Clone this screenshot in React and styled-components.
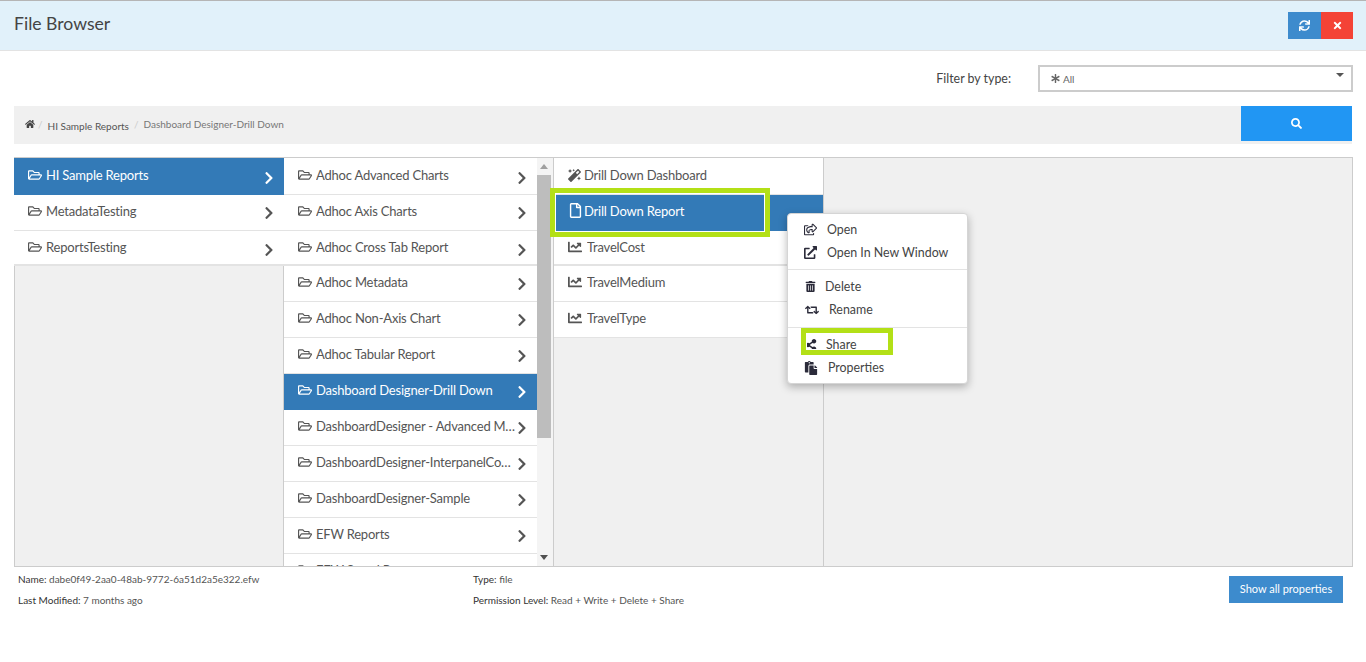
import React from "react";
import styled, { createGlobalStyle } from "styled-components";
import {
  FaAsterisk,
  FaChartLine,
  FaChevronRight,
  FaExternalLinkAlt,
  FaHome,
  FaMagic,
  FaPaste,
  FaRegFile,
  FaRegFolderOpen,
  FaRegShareSquare,
  FaRetweet,
  FaSearch,
  FaShareAlt,
  FaSync,
  FaTimes,
  FaTrashAlt,
} from "react-icons/fa";

const GlobalStyle = createGlobalStyle`
  html, body {
    margin: 0;
    background: #fff;
    font-family: "Lato", "Liberation Sans", sans-serif;
    color: #555;
  }
  * { box-sizing: border-box; }
`;

const Header = styled.header`
  height: 51px;
  display: flex;
  align-items: center;
  justify-content: space-between;
  padding: 0 13px 1px 14px;
  background: #e1f1fa;
  border-top: 1px solid #b5b5b5;
  border-bottom: 1px solid #e3e3e3;
`;

const Title = styled.h1`
  margin: 0 0 3px;
  font-size: 17.6px;
  font-weight: 400;
  color: #444;
`;

const HeaderButtons = styled.div`
  display: flex;
`;

const HeaderButton = styled.button`
  width: ${(p) => p.$width}px;
  height: 27px;
  border: 0;
  padding: 0;
  display: flex;
  align-items: center;
  justify-content: center;
  color: #fff;
  font-size: 11px;
  background: ${(p) => p.$bg};
`;

const Content = styled.main`
  padding: 14px 13px 0 14px;
`;

const FilterRow = styled.div`
  display: flex;
  justify-content: flex-end;
  align-items: center;
  height: 27px;
`;

const FilterLabel = styled.label`
  font-size: 12.4px;
  color: #444;
  margin-right: 27px;
`;

const Select = styled.div`
  position: relative;
  width: 315px;
  height: 27px;
  border: 2px solid #ccc;
  display: flex;
  align-items: center;
  gap: 3px;
  padding-left: 11px;
  font-size: 10px;
  color: #666;

  &::after {
    content: "";
    position: absolute;
    top: 6px;
    right: 7px;
    border-left: 4px solid transparent;
    border-right: 4px solid transparent;
    border-top: 4px solid #555;
  }
`;

const CrumbBar = styled.div`
  display: flex;
  align-items: flex-start;
  justify-content: space-between;
  height: 38px;
  margin: 14px 1px 0 0;
  background: #f0f0f0;
`;

const Crumbs = styled.div`
  display: flex;
  align-items: center;
  height: 36px;
  padding-left: 11px;
  font-size: 10px;
  color: #444;
`;

const CrumbDivider = styled.span`
  color: #ccc;
  margin: 0 5px 0 3px;
`;

const CrumbLink = styled.span`
  color: #555;
  padding-top: 4px;
  margin-right: 2px;
`;

const CrumbCurrent = styled.span`
  color: #777;
`;

const SearchButton = styled.button`
  width: 111px;
  height: 35px;
  border: 0;
  padding: 0;
  display: flex;
  align-items: center;
  justify-content: center;
  color: #fff;
  font-size: 11px;
  background: #2196f3;
`;

const Browser = styled.section`
  position: relative;
  display: flex;
  height: 410px;
  margin-top: 13px;
  background: #f0f0f0;
  border: 1px solid #ccc;
`;

const Column = styled.div`
  position: relative;
  display: flex;
  flex: 0 0 ${(p) => p.$width}px;
  height: 100%;
  border-right: ${(p) => (p.$divider ? "1px solid #ccc" : "0")};
  overflow: ${(p) => (p.$clip ? "hidden" : "visible")};
`;

const List = styled.ul`
  flex: 1;
  min-width: 0;
  margin: 0;
  padding: 0;
  list-style: none;
`;

const RootList = styled(List)`
  margin: 0 -1px;
`;

const Row = styled.li`
  position: relative;
  display: flex;
  align-items: center;
  height: 36px;
  padding: 0 10px 4px 14px;
  font-size: 13px;
  letter-spacing: -0.2px;
  color: ${(p) => (p.$active ? "#fff" : "#555")};
  background: ${(p) => (p.$active ? "#337ab7" : "#fff")};
  border-bottom: 1px solid ${(p) => (p.$active ? "#337ab7" : "#e3e3e3")};

  &:first-child {
    height: 37px;
    padding-bottom: 2px;
  }

  &:nth-child(3) {
    height: 35px;
    padding-bottom: 1px;
    border-bottom-width: 2px;
  }
`;

const RowIcon = styled.span`
  display: flex;
  flex: none;
  margin-right: ${(p) => p.$gap || 4}px;
  font-size: ${(p) => p.$size || 14}px;
  color: ${(p) => (p.$active ? "#fff" : "#555")};
`;

const RowLabel = styled.span`
  flex: 1;
  min-width: 0;
  white-space: nowrap;
  overflow: hidden;
  text-overflow: ellipsis;
`;

const Chevron = styled(FaChevronRight)`
  flex: none;
  width: 10px;
  height: 14px;
  margin-top: 5px;
  color: ${(p) => (p.$active ? "#fff" : "#555")};
`;

const Scrollbar = styled.div`
  flex: 0 0 16px;
  display: flex;
  flex-direction: column;
  align-items: center;
  padding-right: 2px;
  background: #f4f4f4;
`;

const ArrowUp = styled.div`
  margin: 6px 0 6px;
  border-left: 4px solid transparent;
  border-right: 4px solid transparent;
  border-bottom: 5px solid #a0a0a0;
`;

const ArrowDown = styled.div`
  margin-top: auto;
  margin-bottom: 6px;
  border-left: 4px solid transparent;
  border-right: 4px solid transparent;
  border-top: 5px solid #505050;
`;

const Thumb = styled.div`
  width: 14px;
  height: 263px;
  background: #bdbdbd;
`;

const Highlight = styled.div`
  position: absolute;
  top: ${(p) => p.$top}px;
  left: ${(p) => p.$left}px;
  width: ${(p) => p.$w}px;
  height: ${(p) => p.$h}px;
  border: 5px solid #b3e017;
  box-shadow: inset 0 0 0 1px #fff;
  pointer-events: none;
`;

const Menu = styled.div`
  position: absolute;
  top: 55px;
  left: 772px;
  width: 181px;
  height: 171px;
  padding: 4px 0;
  background: #fff;
  border: 1px solid #d5d5d5;
  border-radius: 4px;
  box-shadow: 0 3px 8px rgba(0, 0, 0, 0.28);
`;

const MenuItem = styled.div`
  position: relative;
  display: flex;
  align-items: center;
  height: 23px;
  padding-left: ${(p) => p.$pad || 16}px;
  font-size: 12.4px;
  color: #444;
`;

const MenuIcon = styled.span`
  display: flex;
  margin-right: ${(p) => p.$gap}px;
  font-size: ${(p) => p.$size || 13}px;
  color: #2b2b3a;
`;

const MenuDivider = styled.div`
  height: 1px;
  margin: ${(p) => p.$top || 5}px 0 5px;
  background: #e3e3e3;
`;

const Footer = styled.footer`
  display: flex;
  align-items: flex-start;
  padding: 6px 10px 0 4px;
`;

const Meta = styled.div`
  flex: 0 0 ${(p) => p.$width}px;
  font-size: 10px;
  color: #555;
`;

const MetaLine = styled.p`
  margin: 0 0 9px;
  height: 12px;
  line-height: 12px;
`;

const MetaKey = styled.span`
  color: #333;
`;

const PropsButton = styled.button`
  margin: 3px 0 0 auto;
  width: 114px;
  height: 27px;
  border: 0;
  padding: 0 0 2px;
  font: inherit;
  font-size: 11px;
  color: #fff;
  background: #3d8bcd;
`;

const roots = [
  { name: "HI Sample Reports", active: true },
  { name: "MetadataTesting" },
  { name: "ReportsTesting" },
];

const folders = [
  { name: "Adhoc Advanced Charts" },
  { name: "Adhoc Axis Charts" },
  { name: "Adhoc Cross Tab Report" },
  { name: "Adhoc Metadata" },
  { name: "Adhoc Non-Axis Chart" },
  { name: "Adhoc Tabular Report" },
  { name: "Dashboard Designer-Drill Down", active: true },
  { name: "DashboardDesigner - Advanced Metadata" },
  { name: "DashboardDesigner-InterpanelCommunication" },
  { name: "DashboardDesigner-Sample" },
  { name: "EFW Reports" },
  { name: "EFW Saved Reports" },
];

const files = [
  { name: "Drill Down Dashboard", icon: FaMagic, size: 13, gap: 3 },
  { name: "Drill Down Report", icon: FaRegFile, size: 15, gap: 1, active: true },
  { name: "TravelCost", icon: FaChartLine, size: 14, gap: 5 },
  { name: "TravelMedium", icon: FaChartLine, size: 14, gap: 5 },
  { name: "TravelType", icon: FaChartLine, size: 14, gap: 5 },
];

const FolderRows = ({ items }) =>
  items.map((item) => (
    <Row key={item.name} $active={item.active}>
      <RowIcon $active={item.active}>
        <FaRegFolderOpen />
      </RowIcon>
      <RowLabel>{item.name}</RowLabel>
      <Chevron $active={item.active} />
    </Row>
  ));

export default function App() {
  return (
    <>
      <GlobalStyle />
      <Header>
        <Title>File Browser</Title>
        <HeaderButtons>
          <HeaderButton $width={33} $bg="#3d8bcd">
            <FaSync />
          </HeaderButton>
          <HeaderButton $width={32} $bg="#f44336">
            <FaTimes />
          </HeaderButton>
        </HeaderButtons>
      </Header>
      <Content>
        <FilterRow>
          <FilterLabel>Filter by type:</FilterLabel>
          <Select>
            <FaAsterisk size={9} />
            All
          </Select>
        </FilterRow>
        <CrumbBar>
          <Crumbs>
            <FaHome size={10} />
            <CrumbDivider>/</CrumbDivider>
            <CrumbLink>HI Sample Reports</CrumbLink>
            <CrumbDivider>/</CrumbDivider>
            <CrumbCurrent>Dashboard Designer-Drill Down</CrumbCurrent>
          </Crumbs>
          <SearchButton>
            <FaSearch />
          </SearchButton>
        </CrumbBar>
        <Browser>
          <Column $width={269} $divider>
            <RootList>
              <FolderRows items={roots} />
            </RootList>
          </Column>
          <Column $width={270} $divider $clip>
            <List>
              <FolderRows items={folders} />
            </List>
            <Scrollbar>
              <ArrowUp />
              <Thumb />
              <ArrowDown />
            </Scrollbar>
          </Column>
          <Column $width={270} $divider>
            <List>
              {files.map((file) => (
                <Row key={file.name} $active={file.active}>
                  <RowIcon $active={file.active} $size={file.size} $gap={file.gap}>
                    <file.icon />
                  </RowIcon>
                  <RowLabel>{file.name}</RowLabel>
                </Row>
              ))}
            </List>
            <Highlight $top={30} $left={-4} $w={220} $h={49} />
          </Column>
          <Menu>
            <MenuItem>
              <MenuIcon $gap={10} $size={13}>
                <FaRegShareSquare />
              </MenuIcon>
              Open
            </MenuItem>
            <MenuItem>
              <MenuIcon $gap={10} $size={13}>
                <FaExternalLinkAlt />
              </MenuIcon>
              Open In New Window
            </MenuItem>
            <MenuDivider />
            <MenuItem $pad={17}>
              <MenuIcon $gap={9} $size={11}>
                <FaTrashAlt />
              </MenuIcon>
              Delete
            </MenuItem>
            <MenuItem $pad={17}>
              <MenuIcon $gap={10} $size={14}>
                <FaRetweet />
              </MenuIcon>
              Rename
            </MenuItem>
            <MenuDivider $top={6} />
            <MenuItem $pad={17}>
              <MenuIcon $gap={9} $size={12}>
                <FaShareAlt />
              </MenuIcon>
              Share
              <Highlight $top={-5} $left={13} $w={92} $h={27} />
            </MenuItem>
            <MenuItem>
              <MenuIcon $gap={10} $size={14}>
                <FaPaste />
              </MenuIcon>
              Properties
            </MenuItem>
          </Menu>
        </Browser>
        <Footer>
          <Meta $width={455}>
            <MetaLine>
              <MetaKey>Name:</MetaKey> dabe0f49-2aa0-48ab-9772-6a51d2a5e322.efw
            </MetaLine>
            <MetaLine>
              <MetaKey>Last Modified:</MetaKey> 7 months ago
            </MetaLine>
          </Meta>
          <Meta $width={300}>
            <MetaLine>
              <MetaKey>Type:</MetaKey> file
            </MetaLine>
            <MetaLine>
              <MetaKey>Permission Level:</MetaKey> Read + Write + Delete + Share
            </MetaLine>
          </Meta>
          <PropsButton>Show all properties</PropsButton>
        </Footer>
      </Content>
    </>
  );
}
